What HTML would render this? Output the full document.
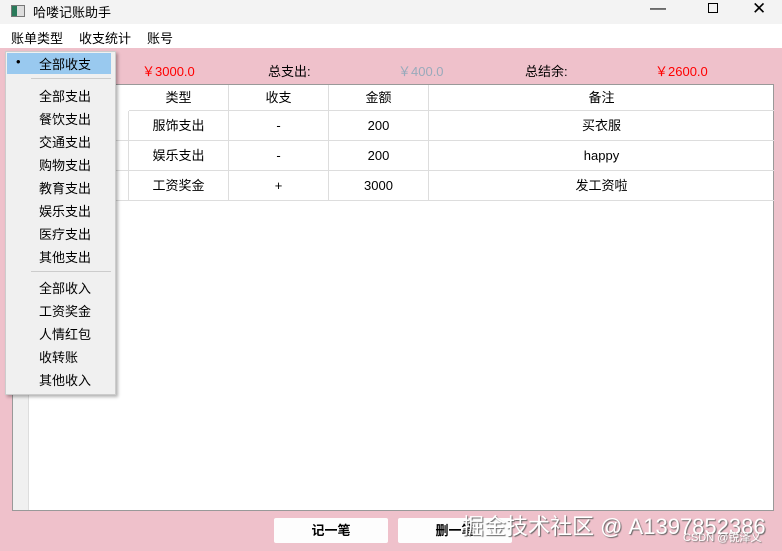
<!DOCTYPE html>
<html><head><meta charset="utf-8"><style>
*{margin:0;padding:0;box-sizing:border-box}
body{width:782px;height:551px;overflow:hidden;background:#efc1cb;font-family:"Liberation Sans","Noto Sans CJK SC",sans-serif;font-size:13px;color:#000;position:relative}
.abs{position:absolute}
#title{left:0;top:0;width:782px;height:24px;background:#f3f3f3}
#menu{left:0;top:24px;width:782px;height:24px;background:#fff}
.t{position:absolute;white-space:nowrap}
#table{left:12px;top:84px;width:762px;height:427px;background:#fff;border:1px solid #999}
.cell{position:absolute;text-align:center;border-right:1px solid #ddd;border-bottom:1px solid #ddd;line-height:29px}
#pop{left:5px;top:51px;width:111px;height:344px;background:#f0f0f0;border:1px solid #ccc;box-shadow:2px 2px 3px rgba(0,0,0,.3)}
.mi{position:absolute;left:33px}
.btn{position:absolute;top:518px;width:114px;height:25px;background:#fdfdfd;border-radius:2px;text-align:center;line-height:25px;font-weight:bold}
</style></head><body>
<div id="title" class="abs">
<div class="abs" style="left:11px;top:5px;width:14px;height:12px;border:1px solid #777;background:#ddd"><div style="width:5px;height:10px;background:#2a7a5a"></div></div>
<span class="t" style="left:33px;top:2px;font-size:13px">哈喽记账助手</span>
<span class="t" style="left:650px;top:0px;font-size:16px">—</span>
<div class="abs" style="left:708px;top:3px;width:10px;height:10px;border:1px solid #000"></div>
<span class="t" style="left:752px;top:-1px;font-size:17px">✕</span>
</div>
<div id="menu" class="abs">
<span class="t" style="left:11px;top:4px">账单类型</span>
<span class="t" style="left:79px;top:4px">收支统计</span>
<span class="t" style="left:147px;top:4px">账号</span>
</div>
<span class="t" style="left:142px;top:61px;color:#f00">￥3000.0</span>
<span class="t" style="left:268px;top:61px">总支出:</span>
<span class="t" style="left:398px;top:61px;color:#9ab">￥400.0</span>
<span class="t" style="left:525px;top:61px">总结余:</span>
<span class="t" style="left:655px;top:61px;color:#f00">￥2600.0</span>
<div id="table" class="abs">
<div class="abs" style="left:0;top:0;width:16px;height:425px;background:#f0f0f0;border-right:1px solid #ddd"></div>
<div class="cell" style="left:116px;top:0;width:100px;height:26px;line-height:26px">类型</div>
<div class="cell" style="left:216px;top:0;width:100px;height:26px;line-height:26px">收支</div>
<div class="cell" style="left:316px;top:0;width:100px;height:26px;line-height:26px">金额</div>
<div class="cell" style="left:416px;top:0;width:345px;height:26px;line-height:26px;border-right:none">备注</div>
<div class="cell" style="left:16px;top:26px;width:100px;height:30px"></div>
<div class="cell" style="left:116px;top:26px;width:100px;height:30px">服饰支出</div>
<div class="cell" style="left:216px;top:26px;width:100px;height:30px">-</div>
<div class="cell" style="left:316px;top:26px;width:100px;height:30px">200</div>
<div class="cell" style="left:416px;top:26px;width:345px;height:30px;border-right:none">买衣服</div>
<div class="cell" style="left:16px;top:56px;width:100px;height:30px"></div>
<div class="cell" style="left:116px;top:56px;width:100px;height:30px">娱乐支出</div>
<div class="cell" style="left:216px;top:56px;width:100px;height:30px">-</div>
<div class="cell" style="left:316px;top:56px;width:100px;height:30px">200</div>
<div class="cell" style="left:416px;top:56px;width:345px;height:30px;border-right:none">happy</div>
<div class="cell" style="left:16px;top:86px;width:100px;height:30px"></div>
<div class="cell" style="left:116px;top:86px;width:100px;height:30px">工资奖金</div>
<div class="cell" style="left:216px;top:86px;width:100px;height:30px">+</div>
<div class="cell" style="left:316px;top:86px;width:100px;height:30px">3000</div>
<div class="cell" style="left:416px;top:86px;width:345px;height:30px;border-right:none">发工资啦</div>
</div>
<div id="pop" class="abs">
<div class="abs" style="left:1px;top:1px;width:104px;height:21px;background:#99c9ef"></div>
<span class="t" style="left:10px;top:2px">•</span>
<span class="mi t" style="top:2px">全部收支</span>
<div class="abs" style="left:25px;top:26px;width:80px;height:1px;background:#ccc"></div>
<span class="mi t" style="top:34px">全部支出</span>
<span class="mi t" style="top:57px">餐饮支出</span>
<span class="mi t" style="top:80px">交通支出</span>
<span class="mi t" style="top:103px">购物支出</span>
<span class="mi t" style="top:126px">教育支出</span>
<span class="mi t" style="top:149px">娱乐支出</span>
<span class="mi t" style="top:172px">医疗支出</span>
<span class="mi t" style="top:195px">其他支出</span>
<div class="abs" style="left:25px;top:219px;width:80px;height:1px;background:#ccc"></div>
<span class="mi t" style="top:226px">全部收入</span>
<span class="mi t" style="top:249px">工资奖金</span>
<span class="mi t" style="top:272px">人情红包</span>
<span class="mi t" style="top:295px">收转账</span>
<span class="mi t" style="top:318px">其他收入</span>
</div>
<div class="btn" style="left:274px">记一笔</div>
<div class="btn" style="left:398px">删一笔</div>
<span class="t" style="left:462px;top:509px;font-size:22px;color:#fff;text-shadow:1px 1px 1px #666">掘金技术社区 @ A1397852386</span>
<span class="t" style="left:683px;top:529px;font-size:11px;color:#fff;text-shadow:1px 1px 1px #777">CSDN @锐泽乂</span>
</body></html>
